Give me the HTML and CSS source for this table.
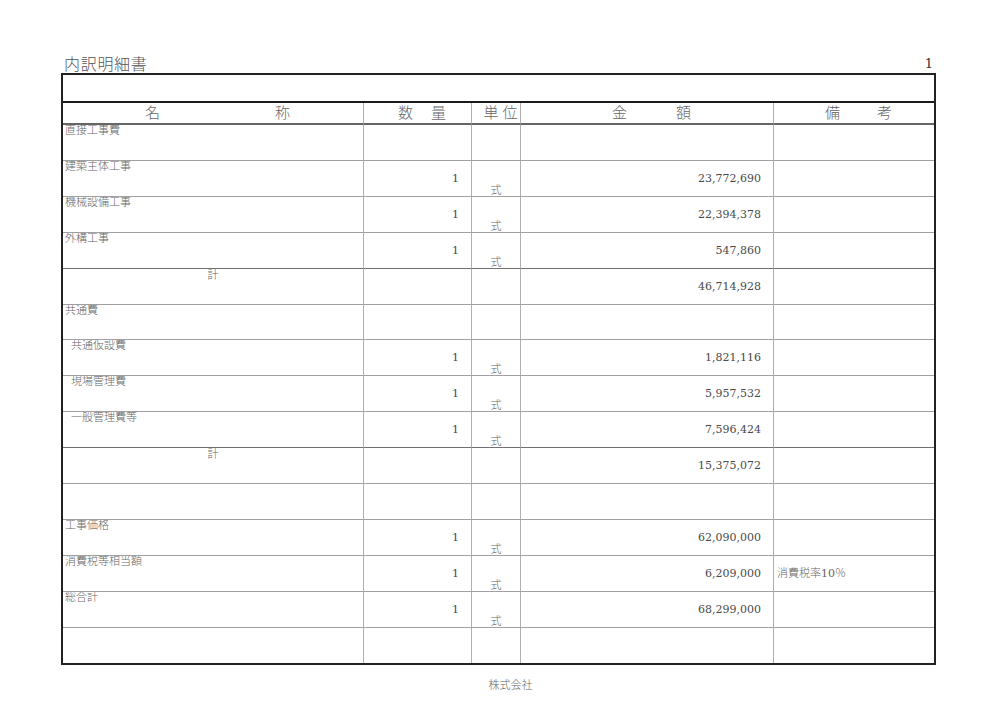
FILE: index.html
```html
<!DOCTYPE html>
<html lang="ja">
<head>
<meta charset="utf-8">
<title>内訳明細書</title>
<link rel="stylesheet" href="styles.css">
</head>
<body>
<div class="sheet">
  <div class="title-bar">
    <div class="title">内訳明細書</div>
    <div class="page-no">1</div>
  </div>
  <table class="grid">
    <colgroup>
      <col class="c-name"><col class="c-qty"><col class="c-unit"><col class="c-amt"><col class="c-note">
    </colgroup>
    <tbody>
      <tr class="r-cap"><td colspan="5"></td></tr>
      <tr class="r-head">
        <td><div class="hd hd-name"><span>名</span><span>称</span></div></td>
        <td><div class="hd hd-qty"><span>数</span><span>量</span></div></td>
        <td><div class="hd hd-unit"><span>単</span><span>位</span></div></td>
        <td><div class="hd hd-amt"><span>金</span><span>額</span></div></td>
        <td class="last"><div class="hd hd-note"><span>備</span><span>考</span></div></td>
      </tr>
      <tr class="r"><td class="nm">直接工事費</td><td class="qt"></td><td class="un"></td><td class="am"></td><td class="nt last"></td></tr>
      <tr class="r"><td class="nm">建築主体工事</td><td class="qt">1</td><td class="un">式</td><td class="am">23,772,690</td><td class="nt last"></td></tr>
      <tr class="r"><td class="nm">機械設備工事</td><td class="qt">1</td><td class="un">式</td><td class="am">22,394,378</td><td class="nt last"></td></tr>
      <tr class="r pre-sum"><td class="nm">外構工事</td><td class="qt">1</td><td class="un">式</td><td class="am">547,860</td><td class="nt last"></td></tr>
      <tr class="r"><td class="nm sum">計</td><td class="qt"></td><td class="un"></td><td class="am">46,714,928</td><td class="nt last"></td></tr>
      <tr class="r short"><td class="nm">共通費</td><td class="qt"></td><td class="un"></td><td class="am"></td><td class="nt last"></td></tr>
      <tr class="r"><td class="nm sub">共通仮設費</td><td class="qt">1</td><td class="un">式</td><td class="am">1,821,116</td><td class="nt last"></td></tr>
      <tr class="r"><td class="nm sub">現場管理費</td><td class="qt">1</td><td class="un">式</td><td class="am">5,957,532</td><td class="nt last"></td></tr>
      <tr class="r pre-sum"><td class="nm sub">一般管理費等</td><td class="qt">1</td><td class="un">式</td><td class="am">7,596,424</td><td class="nt last"></td></tr>
      <tr class="r"><td class="nm sum">計</td><td class="qt"></td><td class="un"></td><td class="am">15,375,072</td><td class="nt last"></td></tr>
      <tr class="r"><td class="nm"></td><td class="qt"></td><td class="un"></td><td class="am"></td><td class="nt last"></td></tr>
      <tr class="r"><td class="nm">工事価格</td><td class="qt">1</td><td class="un">式</td><td class="am">62,090,000</td><td class="nt last"></td></tr>
      <tr class="r"><td class="nm">消費税等相当額</td><td class="qt">1</td><td class="un">式</td><td class="am">6,209,000</td><td class="nt last">消費税率10％</td></tr>
      <tr class="r"><td class="nm">総合計</td><td class="qt">1</td><td class="un">式</td><td class="am">68,299,000</td><td class="nt last"></td></tr>
      <tr class="r end"><td class="nm"></td><td class="qt"></td><td class="un"></td><td class="am"></td><td class="nt last"></td></tr>
    </tbody>
  </table>
  <div class="foot">株式会社</div>
</div>
</body>
</html>
```

FILE: styles.css
```css
html, body {
  background: #fff;
}

body {
  margin: 0;
  padding: 57px 0 0 61px;
  font-family: "DejaVu Serif", "Noto Sans CJK JP", serif;
  color: #4a4a4a;
}

.sheet {
  width: 875px;
}

.title-bar {
  display: flex;
  justify-content: space-between;
  align-items: flex-end;
  height: 16px;
}

.title {
  font-size: 16px;
  line-height: 16px;
  letter-spacing: 0.7px;
  padding-left: 3px;
  color: #555;
  font-weight: 300;
}

.page-no {
  font-size: 13px;
  line-height: 13px;
  padding-right: 3px;
  padding-bottom: 3px;
  color: #333;
}

.grid {
  width: 875px;
  table-layout: fixed;
  border-collapse: separate;
  border-spacing: 0;
  border: 2px solid #222;
}

.c-name { width: 301px; }
.c-qty { width: 108px; }
.c-unit { width: 49px; }
.c-amt { width: 253px; }
.c-note { width: 160px; }

.grid td {
  padding: 0;
  border-right: 1px solid #b0b0b0;
  border-bottom: 1px solid #a0a0a0;
  font-size: 11px;
  line-height: 11px;
  white-space: nowrap;
  overflow: hidden;
}

.grid td.last {
  border-right: none;
}

.r-cap {
  height: 28px;
}

.r-cap td {
  border-right: none;
  border-bottom: 2px solid #1a1a1a;
}

.r-head {
  height: 22px;
}

.r-head td {
  border-bottom: 2px solid #666;
  vertical-align: middle;
}

.hd {
  display: flex;
  justify-content: center;
  padding-left: 9px;
  font-size: 15px;
  line-height: 15px;
  color: #666;
  font-weight: 300;
}

.hd-name { gap: 115px; }
.hd-qty { gap: 18px; }
.hd-unit { gap: 4px; }
.hd-amt { gap: 49px; }
.hd-note { gap: 37px; }

.r {
  height: 36px;
}

.r.short {
  height: 35px;
}

.r.end {
  height: 35px;
}

.r.end td {
  border-bottom: none;
}

.r.pre-sum td {
  border-bottom-color: #707070;
}

.nm {
  vertical-align: top;
  padding-left: 2px !important;
  color: #666;
  font-weight: 300;
}

.nm.sub {
  padding-left: 8px !important;
}

.nm.sum {
  text-align: center;
  padding-left: 0 !important;
  padding-top: 1px !important;
}

.qt {
  vertical-align: middle;
  text-align: right;
  padding-right: 12px !important;
}

.un {
  vertical-align: bottom;
  text-align: center;
  line-height: 10px !important;
  color: #666;
  font-weight: 300;
}

.am {
  vertical-align: middle;
  text-align: right;
  padding-right: 12px !important;
}

.nt {
  vertical-align: middle;
  padding-left: 3px !important;
  color: #666;
  font-weight: 300;
}

.foot {
  margin-top: 15px;
  padding-left: 24px;
  text-align: center;
  font-size: 11px;
  line-height: 11px;
  color: #666;
  font-weight: 300;
}
```
